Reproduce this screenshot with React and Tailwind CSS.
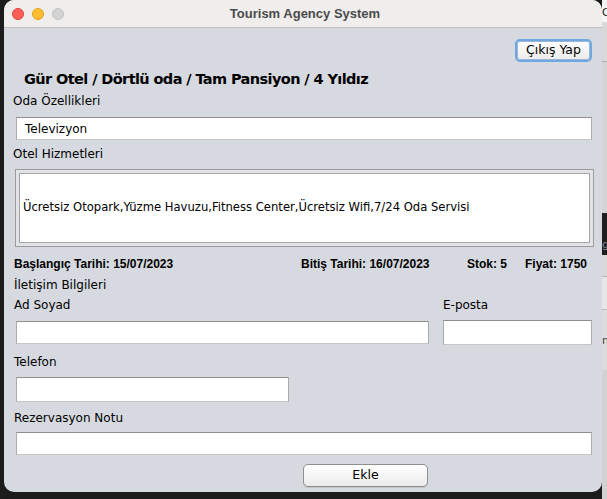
import React from 'react';

const Field = ({ className = '', value = '' }) => (
  <div
    className={`h-[23px] bg-white border border-[#ababab] border-t-[#8f8f8f] border-b-[#c6c6c6] flex items-center pl-[8px] text-[12px] text-black ${className}`}
  >
    {value}
  </div>
);

const Label = ({ children, className = '' }) => (
  <div className={`h-[16px] leading-[16px] text-[12px] text-black ${className}`}>{children}</div>
);

const MacButton = ({ children, focused, className = '' }) => (
  <button
    className={`h-[23px] rounded-[5px] bg-gradient-to-b from-white to-[#ebebeb] text-[12.5px] text-black flex items-center justify-center ${
      focused
        ? 'border-2 border-[#6fa7e0] shadow-[inset_0_0_0_1px_#9ab6d4]'
        : 'border border-[#8e8e8e] shadow-[0_1px_0_#c4c4c4]'
    } ${className}`}
  >
    {children}
  </button>
);

export default function App() {
  return (
    <div
      className="w-[607px] h-[499px] bg-[#1b1b1b] flex overflow-hidden"
      style={{ fontFamily: '"DejaVu Sans", sans-serif' }}
    >
      {/* left strip of desktop behind */}
      <div className="w-[4px] shrink-0 bg-[#1c1c1c]" />

      {/* window */}
      <div className="w-[598px] shrink-0 h-[492px] flex flex-col rounded-[10px] overflow-hidden bg-[#d6d9df]">
        <div className="h-[28px] shrink-0 bg-[#efeeed] border-b border-[#bdbdbd] flex items-center relative">
          <div className="flex items-center gap-[8px] pl-[8px]">
            <span className="w-[12px] h-[12px] rounded-full bg-[#fe5f57] border border-[#e0443e]" />
            <span className="w-[12px] h-[12px] rounded-full bg-[#febc2e] border border-[#dea123]" />
            <span className="w-[12px] h-[12px] rounded-full bg-[#d3d3d3] border border-[#c2c2c2]" />
          </div>
          <div
            className="flex-1 text-center text-[13px] font-bold text-[#4b4b4b] pr-[56px]"
            style={{ fontFamily: '"Liberation Sans", Arial, sans-serif' }}
          >
            Tourism Agency System
          </div>
        </div>

        <div className="flex flex-col">
          <div className="flex justify-end pr-[10px] mt-[11px]">
            <MacButton focused className="w-[77px]">Çıkış Yap</MacButton>
          </div>

          <div className="mt-[8px] pl-[20px] h-[18px] leading-[18px] text-[14.5px] font-bold text-black tracking-[-0.6px]">
            Gür Otel / Dörtlü oda / Tam Pansiyon / 4 Yıldız
          </div>

          <Label className="mt-[5px] pl-[9px]">Oda Özellikleri</Label>
          <div className="px-[10px] pl-[12px] mt-[8px]">
            <Field value="Televizyon" />
          </div>

          <Label className="mt-[6px] pl-[9px]">Otel Hizmetleri</Label>
          <div className="pl-[11px] pr-[8px] mt-[7px]">
            <div className="h-[78px] border border-[#9c9c9c] bg-[#e1e3e7] p-[3px]">
              <div className="h-full bg-white border border-[#a4a4a4] flex items-center pl-[3px] text-[11.6px] text-black">
                Ücretsiz Otopark,Yüzme Havuzu,Fitness Center,Ücretsiz Wifi,7/24 Oda Servisi
              </div>
            </div>
          </div>

          <div
            className="mt-[9px] pl-[10px] flex h-[16px] leading-[16px] text-[12px] font-bold text-black"
            style={{ fontFamily: '"Liberation Sans", Arial, sans-serif' }}
          >
            <span className="w-[287px]">Başlangıç Tarihi: 15/07/2023</span>
            <span className="w-[166px]">Bitiş Tarihi: 16/07/2023</span>
            <span className="w-[58px]">Stok: 5</span>
            <span>Fiyat: 1750</span>
          </div>

          <Label className="mt-[5px] pl-[10px]">İletişim Bilgileri</Label>

          <div className="mt-[4px] flex">
            <Label className="pl-[10px] w-[439px]">Ad Soyad</Label>
            <Label>E-posta</Label>
          </div>

          <div className="mt-[7px] flex items-center pl-[12px]">
            <Field className="w-[413px]" />
            <Field className="w-[149px] h-[25px] ml-[14px]" />
          </div>

          <Label className="mt-[9px] pl-[10px]">Telefon</Label>
          <div className="mt-[7px] pl-[12px]">
            <Field className="w-[273px] h-[25px]" />
          </div>

          <Label className="mt-[8px] pl-[10px]">Rezervasyon Notu</Label>
          <div className="mt-[6px] pl-[12px] pr-[10px]">
            <Field />
          </div>

          <div className="mt-[9px] pl-[299px]">
            <MacButton className="w-[125px]">Ekle</MacButton>
          </div>
        </div>
      </div>

      {/* right strip of desktop behind */}
      <div className="flex-1 flex flex-col text-[11px] leading-none overflow-hidden">
        <div className="h-[22px] bg-[#f4f4f4] text-[#222] pt-[7px]">C</div>
        <div className="h-[40px] bg-[#d9d9d9] border-b border-[#b0b0b0]" />
        <div className="h-[151px] bg-[#d4d4d4]" />
        <div className="h-[42px] bg-[#1e1e1e] text-[#888] pt-[26px]">g</div>
        <div className="h-[22px] bg-[#dadada] border-b border-[#b5b5b5]" />
        <div className="h-[33px] bg-[#e6e6e6] border-b border-[#bcbcbc]" />
        <div className="h-[60px] bg-[#dcdcdc] text-[#444] pt-[25px]">n</div>
        <div className="flex-1 bg-[#d2d2d2]" />
      </div>
    </div>
  );
}
